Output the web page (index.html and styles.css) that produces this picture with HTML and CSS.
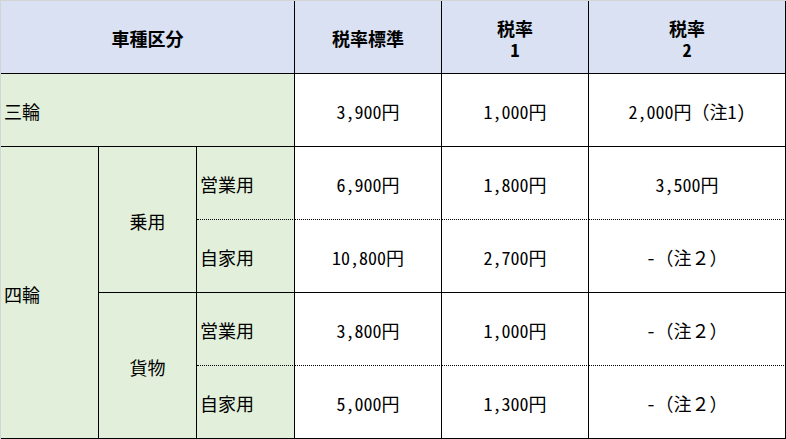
FILE: index.html
```html
<!DOCTYPE html>
<html lang="ja">
<head>
<meta charset="utf-8">
<link rel="stylesheet" href="styles.css">
</head>
<body>
<div class="sheet">
  <div class="cell head span3">車種区分</div>
  <div class="cell head">税率標準</div>
  <div class="cell head"><span class="ln">税率</span><span class="ln">1</span></div>
  <div class="cell head"><span class="ln">税率</span><span class="ln">2</span></div>

  <div class="cell cat span3 left">三輪</div>
  <div class="cell val">3,900円</div>
  <div class="cell val">1,000円</div>
  <div class="cell val">2,000円（注1)</div>

  <div class="cell cat left four">四輪</div>
  <div class="cell cat rspan2">乗用</div>
  <div class="cell cat left dot">営業用</div>
  <div class="cell val dot">6,900円</div>
  <div class="cell val dot">1,800円</div>
  <div class="cell val dot">3,500円</div>

  <div class="cell cat left">自家用</div>
  <div class="cell val">10,800円</div>
  <div class="cell val">2,700円</div>
  <div class="cell val">-（注２）</div>

  <div class="cell cat rspan2">貨物</div>
  <div class="cell cat left dot">営業用</div>
  <div class="cell val dot">3,800円</div>
  <div class="cell val dot">1,000円</div>
  <div class="cell val dot">-（注２）</div>

  <div class="cell cat left">自家用</div>
  <div class="cell val">5,000円</div>
  <div class="cell val">1,300円</div>
  <div class="cell val">-（注２）</div>
</div>
</body>
</html>
```
FILE: styles.css
```css
html, body {
  margin: 0;
  padding: 0;
  background: #ffffff;
}
body {
  font-family: "Noto Sans Mono CJK JP", "Noto Sans CJK JP", "Noto Sans", sans-serif;
  font-size: 18px;
  color: #000;
}
.sheet {
  width: 786px;
  height: 439px;
  box-sizing: border-box;
  border-top: 1px solid #d4d4d4;
  border-left: 1px solid #d4d4d4;
  display: grid;
  grid-template-columns: 98px 98px 98px 147px 147px 197px;
  grid-template-rows: repeat(6, 73px);
}
.cell {
  box-sizing: border-box;
  border-right: 1px solid #000;
  border-bottom: 1px solid #000;
  display: flex;
  flex-direction: column;
  align-items: center;
  justify-content: center;
  text-align: center;
  line-height: 21px;
  padding-top: 3px;
}
.ln {
  display: block;
  line-height: 21px;
}
.head {
  background: #d9e1f2;
  font-weight: bold;
}
.span3 {
  grid-column: span 3;
}
.cat {
  background: #e2efda;
}
.val {
  background: #ffffff;
}
.left {
  align-items: flex-start;
  padding-left: 3px;
}
.four {
  grid-row: span 4;
}
.rspan2 {
  grid-row: span 2;
}
.dot {
  border-bottom: 1px dotted #000;
}
```
